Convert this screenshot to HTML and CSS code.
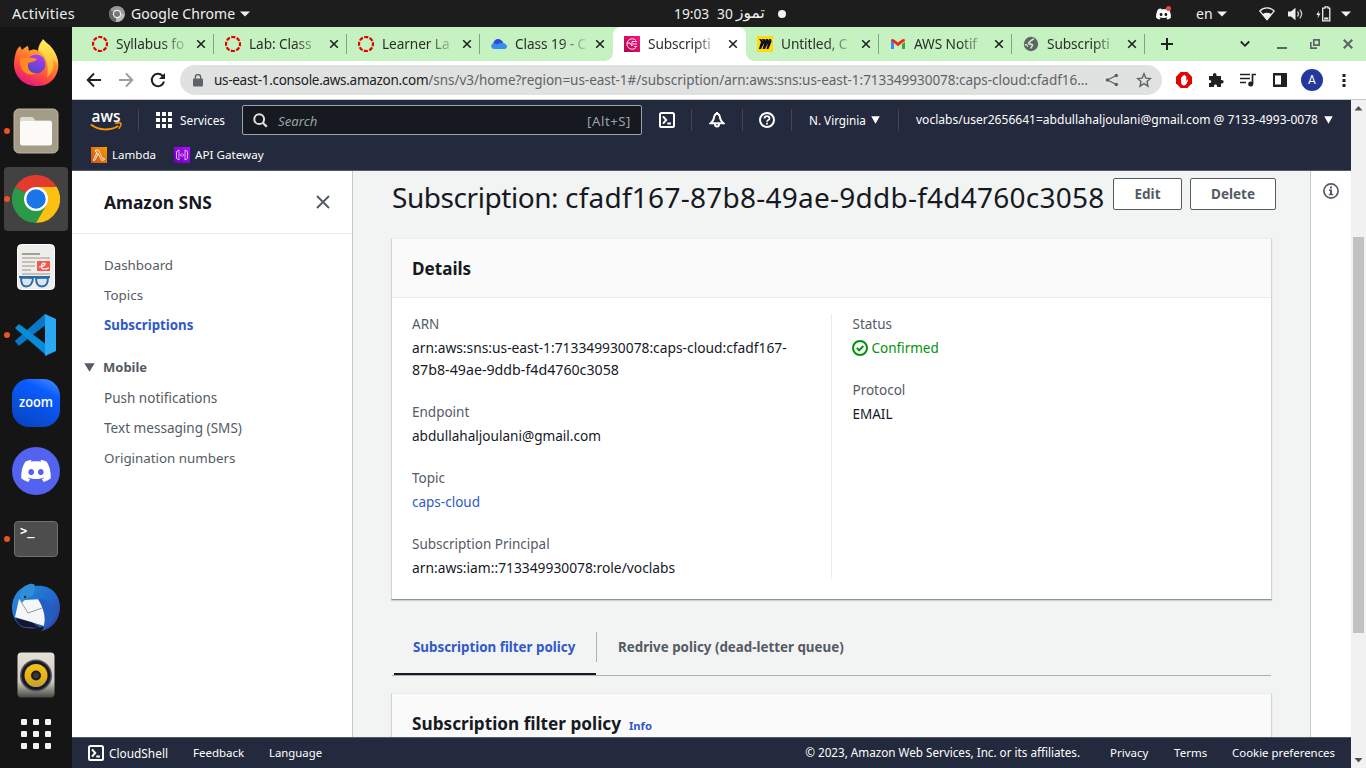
FILE: index.html
```html
<!DOCTYPE html>
<html lang="en">
<head>
<meta charset="utf-8">
<title>Subscription | Amazon SNS</title>
<link rel="stylesheet" href="styles.css">
</head>
<body>
<svg class="defs" width="0" height="0" aria-hidden="true">
  <defs>
    <linearGradient id="ffBody" x1=".8" y1="0" x2=".3" y2="1"><stop offset="0" stop-color="#fff04f"/><stop offset=".35" stop-color="#ff9a2b"/><stop offset=".7" stop-color="#ff4a3d"/><stop offset="1" stop-color="#e31587"/></linearGradient>
    <linearGradient id="ffTail" x1="0" y1="0" x2="0" y2="1"><stop offset="0" stop-color="#fff25a"/><stop offset="1" stop-color="#ffa62b"/></linearGradient>
    <linearGradient id="ffGlobe" x1=".7" y1="0" x2=".4" y2="1"><stop offset="0" stop-color="#b33df5"/><stop offset="1" stop-color="#4f46c8"/></linearGradient>
    <linearGradient id="zoomBg" x1=".8" y1="0" x2=".3" y2="1"><stop offset="0" stop-color="#3f86ff"/><stop offset=".25" stop-color="#0b5cff"/><stop offset="1" stop-color="#0845c4"/></linearGradient>
    <linearGradient id="tbBg" x1="0" y1="0" x2="1" y2="1"><stop offset="0" stop-color="#2f8fe0"/><stop offset=".5" stop-color="#1f6fd0"/><stop offset="1" stop-color="#3b35a0"/></linearGradient>
    <linearGradient id="spkBg" x1="0" y1="0" x2="0" y2="1"><stop offset="0" stop-color="#e6e1d6"/><stop offset=".65" stop-color="#cfcabf"/><stop offset="1" stop-color="#4a4946"/></linearGradient>
    <linearGradient id="spkY" x1="0" y1="0" x2="0" y2="1"><stop offset="0" stop-color="#f3c419"/><stop offset=".6" stop-color="#e9b013"/><stop offset="1" stop-color="#b8a03a"/></linearGradient>
    <linearGradient id="lamBg" x1="0" y1="1" x2="1" y2="0"><stop offset="0" stop-color="#c8511b"/><stop offset="1" stop-color="#f90"/></linearGradient>
    <linearGradient id="apiBg" x1="0" y1="1" x2="1" y2="0"><stop offset="0" stop-color="#6a00b8"/><stop offset="1" stop-color="#b40cff"/></linearGradient>
    <linearGradient id="snsBg" x1="0" y1="1" x2="1" y2="0"><stop offset="0" stop-color="#b0084d"/><stop offset="1" stop-color="#ff1280"/></linearGradient>
    <symbol id="canvas" viewBox="0 0 16 16"><circle cx="8" cy="8" r="7" fill="none" stroke="#e40000" stroke-width="2.2" stroke-dasharray="4.1 1.4" stroke-dashoffset="2"/></symbol>
    <symbol id="close" viewBox="0 0 10 10"><path d="M1.2 1.2l7.6 7.6M8.8 1.2L1.2 8.8" stroke="currentColor" stroke-width="1.6" fill="none"/></symbol>
    <symbol id="shell" viewBox="0 0 16 16"><rect x="1" y="1" width="14" height="14" rx="1.6" fill="none" stroke="#fff" stroke-width="2"/><path d="M4 4.400L7.200 8 4 11.600M8.300 11.500h3.600" fill="none" stroke="#fff" stroke-width="2"/></symbol>
    <symbol id="caret" viewBox="0 0 10 8" preserveAspectRatio="none"><path d="M.3.300h9.400L5 7.800z" fill="currentColor"/></symbol>
    <symbol id="discord" viewBox="0 0 30 24"><path d="M10.500 1.500L9.600 1C7.500 1.400 5.600 2 4.200 2.700 1.500 7 0 12.500.2 19.300c2.300 1.900 4.700 3 7.200 3.700l1.700-2.900-2.300-1.200.7-.5c4.700 2 10.300 2 15 0l.7.5-2.300 1.200 1.700 2.900c2.500-.7 4.900-1.800 7.200-3.700C30 12.500 28.500 7 25.800 2.700 24.400 2 22.500 1.400 20.400 1l-.9.500.5 1.200c-3.200-.5-6.800-.5-10 0zM10.200 10c1.700 0 2.900 1.400 2.900 3.100s-1.200 3.100-2.900 3.100-2.900-1.400-2.900-3.100S8.500 10 10.200 10zm9.600 0c1.700 0 2.900 1.400 2.900 3.100s-1.200 3.100-2.900 3.100-2.900-1.400-2.900-3.100S18.100 10 19.800 10z" fill="#fff" fill-rule="evenodd"/></symbol>
  </defs>
</svg>

<header class="topbar">
  <span class="activities">Activities</span>
  <span class="app-menu">
    <svg width="16" height="16" viewBox="0 0 16 16"><circle cx="8" cy="8" r="8" fill="#9a9a9a"/><path d="M8 8L1.200 4A8 8 0 0 0 7 16z" fill="#666"/><path d="M8 8h7.500A8 8 0 0 1 7 16z" fill="#bdbdbd"/><circle cx="8" cy="8" r="3.600" fill="#777" stroke="#f1f1f1" stroke-width="1.200"/></svg>
    <span class="app-name">Google Chrome</span>
    <svg class="tri" width="10" height="6" viewBox="0 0 10 6"><path d="M0 .5h10L5 5.500z" fill="#f2f2f2"/></svg>
  </span>
  <span class="clock"><span>19:03</span><span>30</span><span class="ar">تموز</span><i></i></span>
  <span class="tray">
    <span class="tray-discord"><svg width="15" height="12"><use href="#discord"/></svg><i></i></span>
    <span class="lang">en</span>
    <svg class="tri t1" width="10" height="6" viewBox="0 0 10 6"><path d="M0 .5h10L5 5.500z" fill="#f2f2f2"/></svg>
    <svg class="wifi" width="16" height="14" viewBox="0 0 16 14"><path d="M.8 4C5-.2 11-.2 15.200 4L8 12.800z" fill="none" stroke="#eee" stroke-width="1.200"/><path d="M3.400 7.200c3-1.900 6.200-1.900 9.200 0L8 13z" fill="#eee"/></svg>
    <svg class="vol" width="16" height="14" viewBox="0 0 16 14"><path d="M0 4.500h3L7.500.8v12.400L3 9.500H0z" fill="#eee"/><path d="M9.500 4.500c1.200 1.500 1.200 3.500 0 5M11.800 2.700c2.200 2.600 2.200 6 0 8.600" fill="none" stroke="#ccc" stroke-width="1.300"/></svg>
    <svg class="bat" width="15" height="16" viewBox="0 0 15 16"><path d="M3 4.500L.3 9h2L1.500 12.500 4.500 7.500h-2z" fill="#eee"/><path d="M6.700 2.200H9V.8h3v1.400h1.800v12.600H6.700z" fill="none" stroke="#eee" stroke-width="1.300"/><path d="M8.200 11.500h4.200v2H8.200z" fill="#eee"/></svg>
    <svg class="tri" width="10" height="6" viewBox="0 0 10 6"><path d="M0 .5h10L5 5.500z" fill="#f2f2f2"/></svg>
  </span>
</header>

<div class="desktop">
<nav class="dock">
  <div class="app"><svg width="46" height="48" viewBox="0 0 46 48"><path d="M3 13c1-3 3-5 4-6l2 4c2-2 5-4 6-4l1 5c3-2 7-2 9 0 0-6 4-10 5-12 3 4 8 6 11 12 6 10 5 18 2 24-4 8-11 11-19 11C11 47 1 38 1 25c0-5 1-8 2-12z" fill="url(#ffBody)"/><path d="M26 12c0-5 2-9 5-11 2 5 8 6 11 13 2 4 3 8 3 12-2-4-4-5-5-5 2 9-2 15-6 17 2-10 0-20-8-26z" fill="url(#ffTail)"/><circle cx="23" cy="25" r="9.500" fill="url(#ffGlobe)"/><path d="M7 20c4-2 12-2 17 0-2 4-8 2-9 5-1 6 4 10 9 9-9 5-18-2-17-14z" fill="#ff8a20"/></svg></div>
  <div class="app run"><svg width="46" height="46" viewBox="0 0 46 46"><rect x="1" y="1" width="44" height="44" rx="5" fill="#a59c88" stroke="#bdb6a5"/><path d="M7 11.500q0-2.500 2.500-2.500h9q1.500 0 2.500 1.500l1.500 2H37q2 0 2 2V20H7z" fill="#dedbd0"/><rect x="7" y="13" width="32" height="24.500" rx="2.500" fill="#fbfaf8"/></svg></div>
  <div class="app run active"><svg width="48" height="48" viewBox="0 0 48 48"><path d="M24 24L3.200 12A24 24 0 0 1 44.800 12z" fill="#e33b2e"/><path d="M24 24L3.200 12A24 24 0 0 0 24 48l10.400-18z" fill="#2a9a48"/><path d="M24 12h20.800A24 24 0 0 1 24 48L34.400 30z" fill="#fcc013"/><circle cx="24" cy="24" r="12" fill="#fff"/><circle cx="24" cy="24" r="9.700" fill="#1b74e8"/></svg></div>
  <div class="app"><svg width="38" height="46" viewBox="0 0 38 46"><rect x=".5" y=".5" width="37" height="45" rx="4" fill="#ededee" stroke="#fff"/><path d="M5 10h18" stroke="#a79d8b" stroke-width="2"/><path d="M5 14h28M5 18h13M5 22h13M5 26h9M5 30h28" stroke="#b9b3a6" stroke-width="1.700"/><rect x="20" y="17" width="13" height="10" fill="#f4584c"/><path d="M22 23c5 0 8-4 5-4s-4 6 0 6 3-1 5-1" stroke="#fff" stroke-width="1.200" fill="none"/><path d="M2 33h31M4 33.500c0 6 1.500 9 5 9s6.500-2.500 7-8.500zm15 .5c0 6 2.500 8.500 6 8.500s6-3 6-9z" fill="#dde5ec" stroke="#2869a8" stroke-width="1.900"/></svg></div>
  <div class="app run"><svg width="44" height="44" viewBox="0 0 44 44"><path d="M1 28L31 1v11L5 33z" fill="#0767b3"/><path d="M31 1L1 28l4 4L33 11z" fill="#0a78c4"/><path d="M1 15l4-4 28 21v11z" fill="#078dd8"/><path d="M31 1l11 5v32l-11 5z" fill="#29a9f4"/></svg></div>
  <div class="app"><svg width="48" height="48" viewBox="0 0 48 48"><rect width="48" height="48" rx="17" fill="url(#zoomBg)"/><text class="zoom-word" x="24" y="28" text-anchor="middle" textLength="34" lengthAdjust="spacingAndGlyphs">zoom</text></svg></div>
  <div class="app"><span class="discord"><svg width="30" height="24"><use href="#discord"/></svg></span></div>
  <div class="app run"><span class="term">&gt;_</span></div>
  <div class="app"><svg width="48" height="48" viewBox="0 0 48 48"><path d="M18 1c4-1 5 1 5 2 16-2 25 9 25 21 0 13-8 22-19 24l5-5c-9 3-18 3-24 1C3 39 0 32 0 25 0 12 8 4 18 1z" fill="url(#tbBg)"/><path d="M3 35c3 6 7 9 11 9l14 1-8-6z" fill="#17142b"/><path d="M7 16l3 3 3-2 17-1q4 5 2 12l2 7-2 8L3 34z" fill="#f5f6f7"/><path d="M8 17l8 13 17-6" fill="none" stroke="#999" stroke-width="1"/><path d="M8 14c0-8 5-12 11-13 5 2 4 5 3 9-2 5-8 3-12 10z" fill="#2f8fd6"/><circle cx="13" cy="14" r="1.200" fill="#222"/><path d="M30 16c7 1 10 7 9 13l6-3c-2 11-8 17-14 21 2-7 4-16-5-31z" fill="#225fc0"/></svg></div>
  <div class="app"><svg width="38" height="46" viewBox="0 0 38 46"><rect x=".5" y=".5" width="37" height="45" rx="4" fill="url(#spkBg)"/><circle cx="19" cy="23.500" r="16" fill="#55565a"/><circle cx="19" cy="23.500" r="14.500" fill="#17192b"/><circle cx="19" cy="23.500" r="11.500" fill="url(#spkY)"/><circle cx="19" cy="23.500" r="5" fill="#1c1c1c"/><circle cx="19" cy="23.500" r="3" fill="#383838"/></svg></div>
  <div class="grid9"><i></i><i></i><i></i><i></i><i></i><i></i><i></i><i></i><i></i></div>
</nav>

<div class="window">
  <div class="tabs">
    <div class="tab sep"><svg width="16" height="16"><use href="#canvas"/></svg><span>Syllabus fo</span><svg class="x" width="10" height="10"><use href="#close"/></svg></div>
    <div class="tab sep"><svg width="16" height="16"><use href="#canvas"/></svg><span>Lab: Class</span><svg class="x" width="10" height="10"><use href="#close"/></svg></div>
    <div class="tab sep"><svg width="16" height="16"><use href="#canvas"/></svg><span>Learner La</span><svg class="x" width="10" height="10"><use href="#close"/></svg></div>
    <div class="tab"><svg width="16" height="16" viewBox="0 0 16 16"><path d="M2 8.500C2.500 4 6 2 9 3.500c2 .8 3 2.300 3.500 4L9 12z" fill="#2b50d8"/><path d="M6 8.500C10 5.500 16 7 16 10.500c0 1.500-1.200 2.500-2.500 2.500H3.400C-.8 12.800-.8 7.500 3 7.200z" fill="#3a8df0"/></svg><span>Class 19 - C</span><svg class="x" width="10" height="10"><use href="#close"/></svg></div>
    <div class="tab current"><svg width="16" height="16" viewBox="0 0 16 16"><rect width="16" height="16" fill="url(#snsBg)"/><path d="M12 4.500A5.200 5.200 0 1 0 12 11.500M3 7h3l2 3V5.500h2.500M9 8h4M10.500 5.500H13M10 10.500h3" fill="none" stroke="#fff" stroke-width=".9"/></svg><span>Subscripti</span><svg class="x" width="10" height="10"><use href="#close"/></svg></div>
    <div class="tab sep"><svg width="16" height="16" viewBox="0 0 16 16"><rect width="16" height="16" fill="#ffdd00"/><path d="M2 3h2.200l1.300 2L5 3h2.500l1.300 2L8.500 3H11l1.300 2L12 3h2l.6 2.500L11.500 13H9.300l2-6-3.500 6H5.600l1.800-6.500L4 13H1.800L4 6z" fill="#100c2c"/></svg><span>Untitled, C</span><svg class="x" width="10" height="10"><use href="#close"/></svg></div>
    <div class="tab sep"><svg width="16" height="16" viewBox="0 0 16 16"><path d="M1 4v9h3V6z" fill="#4285f4"/><path d="M15 4v9h-3V6z" fill="#34a853"/><path d="M12 4.500l3-1V6l-3 2.500z" fill="#fbbc04"/><path d="M1 4.500C1 2.800 2.600 2.400 4 3.500L8 6.600l4-3.100C13.400 2.400 15 2.800 15 4.500L8 10.200z" fill="#ea2b1f"/></svg><span>AWS Notif</span><svg class="x" width="10" height="10"><use href="#close"/></svg></div>
    <div class="tab sep"><svg width="16" height="16" viewBox="0 0 16 16"><circle cx="8" cy="8" r="7.200" fill="#5f6368"/><path d="M10.500 2.500c-.5 1.800-2.500 1-3 2.500s-2 .8-2 2.300 3.500.2 4 1.700c.3 1.300-1.500 1.500-1.500 3.500M1.800 8.500c1.500 0 2.500.5 3 2" fill="none" stroke="#c5f2c0" stroke-width="1.600"/></svg><span>Subscripti</span><svg class="x" width="10" height="10"><use href="#close"/></svg></div>
    <svg class="plus" width="12" height="12" viewBox="0 0 12 12"><path d="M6 0v12M0 6h12" stroke="#202124" stroke-width="2"/></svg>
    <div class="controls">
      <svg width="10" height="8" viewBox="0 0 10 8"><path d="M.8 1.500L5 5.800l4.200-4.300" fill="none" stroke="#202124" stroke-width="1.800"/></svg>
      <svg class="min" width="10" height="10" viewBox="0 0 10 10"><path d="M0 9h10" stroke="#5f6368" stroke-width="2"/></svg>
      <svg width="10" height="10" viewBox="0 0 10 10"><path d="M3.800.8h5.400v5.400H3.800zM.8 3v6.200H7" fill="none" stroke="#5f6368" stroke-width="1.700"/></svg>
      <svg width="10" height="10" viewBox="0 0 10 10"><path d="M.8.800l8.400 8.400M9.200.8L.8 9.200" stroke="#5f6368" stroke-width="2.100"/></svg>
    </div>
  </div>

  <div class="toolbar">
    <div class="nav-btns">
      <svg width="16" height="16" viewBox="0 0 16 16"><path d="M15 8H2M8 1.500L1.700 8 8 14.500" fill="none" stroke="#202124" stroke-width="1.900"/></svg>
      <svg width="16" height="16" viewBox="0 0 16 16"><path d="M1 8h13M8 1.500L14.300 8 8 14.500" fill="none" stroke="#9b9c9e" stroke-width="1.900"/></svg>
      <svg width="16" height="16" viewBox="0 0 16 16"><path d="M14 9.500A6.200 6.200 0 1 1 12.500 3.700L14 5.200" fill="none" stroke="#202124" stroke-width="2"/><path d="M15 1v6H9z" fill="#202124"/></svg>
    </div>
    <div class="omnibox">
      <svg width="10" height="13" viewBox="0 0 10 13"><rect y="4.500" width="10" height="8" rx="1" fill="#5f6368"/><path d="M2.300 5V3.200a2.700 2.700 0 0 1 5.400 0V5" fill="none" stroke="#5f6368" stroke-width="1.400"/></svg>
      <div class="url"><b>us-east-1.console.aws.amazon.com</b><span>/sns/v3/home?region=us-east-1#/subscription/arn:aws:sns:us-east-1:713349930078:caps-cloud:cfadf16…</span></div>
      <svg class="share" width="14" height="14" viewBox="0 0 14 14"><path d="M11.300 2.500L2.500 7l8.800 4.500" fill="none" stroke="#5f6368" stroke-width="1.300"/><circle cx="11.300" cy="2.500" r="1.800" fill="#5f6368"/><circle cx="2.500" cy="7" r="1.800" fill="#5f6368"/><circle cx="11.300" cy="11.500" r="1.800" fill="#5f6368"/></svg>
      <svg class="star" width="16" height="16" viewBox="0 0 16 16"><path d="M8 1.800l1.800 4.300 4.700.4-3.500 3.100 1 4.600L8 11.700l-4 2.500 1-4.600L1.500 6.500l4.700-.4z" fill="none" stroke="#5f6368" stroke-width="1.400"/></svg>
    </div>
    <div class="ext">
      <svg width="16" height="16" viewBox="0 0 16 16"><path d="M4.700 0h6.600L16 4.700v6.600L11.300 16H4.700L0 11.300V4.700z" fill="#e60000"/><path d="M5 9.500V5.500q.7-.7 1.300 0V4q.7-.8 1.300 0v-.8q.8-.8 1.400 0V4q.7-.7 1.300 0v5l.8-1.200q1-.6 1 .3l-1.700 4q-.6 1.300-2 1.300H7.500Q5 13 5 9.500z" fill="#fff"/></svg>
      <svg width="16" height="16" viewBox="0 0 16 16"><path d="M1 4h4c-.8-4 4-4 3.500 0H13v4c3.500-.6 3.500 4 0 3.500V15H9c.6-3.400-3.600-3.400-3 0H1v-4c3 .6 3-3.500 0-3z" fill="#202124"/></svg>
      <svg width="16" height="14" viewBox="0 0 16 14"><path d="M0 1.500h10M0 5.500h10M0 9.500h6" stroke="#202124" stroke-width="1.700"/><path d="M12.500 11V1.500H16" fill="none" stroke="#202124" stroke-width="1.700"/><circle cx="10.700" cy="11" r="2.500" fill="#202124"/></svg>
      <svg width="16" height="16" viewBox="0 0 16 16"><path d="M1 1h14v14H1zM3 3.500v9h6v-9z" fill="#202124" fill-rule="evenodd"/></svg>
      <span class="avatar">A</span>
      <svg width="16" height="16" viewBox="0 0 16 16"><path d="M6.500 2h3v3h-3zM6.500 7h3v3h-3zM6.500 12h3v3h-3z" fill="#202124"/></svg>
    </div>
  </div>

  <div class="viewport">
  <div class="page">
    <header class="aws">
      <div class="aws-row">
        <svg class="logo" width="32" height="26" viewBox="0 -4 32 26"><text class="logo-word" x="16" y="11" text-anchor="middle" textLength="29" lengthAdjust="spacingAndGlyphs">aws</text><path d="M.8 13.500c8.500 6.300 19.500 6.300 27.500 1.500" fill="none" stroke="#f90" stroke-width="1.900"/><path d="M25 12.600c2-1 5.500-1 6-.3.300.8-.7 4-2.400 5.400" fill="none" stroke="#f90" stroke-width="1.400"/></svg>
        <i class="bar b1"></i>
        <svg class="nine" width="16" height="16" viewBox="0 0 16 16"><path d="M0 0h4v4H0zM6 0h4v4H6zM12 0h4v4h-4zM0 6h4v4H0zM6 6h4v4H6zM12 6h4v4h-4zM0 12h4v4H0zM6 12h4v4H6zM12 12h4v4h-4z" fill="#fff"/></svg>
        <span class="services">Services</span>
        <div class="search"><svg width="15" height="15" viewBox="0 0 15 15"><circle cx="6.200" cy="6.200" r="4.900" fill="none" stroke="#dfe3e3" stroke-width="2"/><path d="M9.800 9.800l4 4" stroke="#dfe3e3" stroke-width="2.200"/></svg><em>Search</em><span>[Alt+S]</span></div>
        <svg class="hshell" width="16" height="16"><use href="#shell"/></svg>
        <i class="bar b2"></i>
        <svg width="16" height="16" viewBox="0 0 16 16"><path d="M8 1.800C6.200 1.800 5.200 3.300 4.800 6.500 4.500 8.500 3.500 9.600 1.600 11.200h12.800C12.500 9.600 11.500 8.500 11.200 6.500 10.800 3.300 9.800 1.800 8 1.800z" fill="none" stroke="#fff" stroke-width="2"/><path d="M6 12a2 2.600 0 0 0 4 0M8 0v2" fill="none" stroke="#fff" stroke-width="2"/></svg>
        <i class="bar b3"></i>
        <svg width="16" height="16" viewBox="0 0 16 16"><circle cx="8" cy="8" r="7" fill="none" stroke="#fff" stroke-width="2"/><path d="M5.500 6.500c0-3.200 5-3.200 5 0C10.500 8.200 8 8 8 9.800" fill="none" stroke="#fff" stroke-width="1.700"/><path d="M7.100 10.800h1.800v1.700H7.100z" fill="#fff"/></svg>
        <i class="bar b4"></i>
        <span class="region">N. Virginia</span><svg class="c" width="9" height="8"><use href="#caret"/></svg>
        <i class="bar b5"></i>
        <span class="account">voclabs/user2656641=abdullahaljoulani@gmail.com @ 7133-4993-0078</span><svg class="c2" width="9" height="8"><use href="#caret"/></svg>
      </div>
      <div class="aws-fav">
        <svg width="16" height="16" viewBox="0 0 16 16"><rect width="16" height="16" fill="url(#lamBg)"/><path d="M4.500 3h3l4 8.500 1.300-.5.700 1.500-2.700 1L7 6.500 4 13.300H2.300L6.200 5H4.500z" fill="none" stroke="#fff" stroke-width=".8"/></svg><span class="lambda">Lambda</span>
        <svg width="16" height="16" viewBox="0 0 16 16"><rect width="16" height="16" fill="url(#apiBg)"/><path d="M2.500 4.500L5 3v10l-2.500-1.500zM13.500 4.500L11 3v10l2.500-1.500zM7.500 6.500L6.500 8l1 1.500M8.600 6.500l1 1.500-1 1.500" fill="none" stroke="#f2d9ff" stroke-width=".8"/></svg><span class="apigw">API Gateway</span>
      </div>
    </header>

    <div class="body">
      <aside class="side">
        <div class="side-head"><h2>Amazon SNS</h2><svg width="14" height="14" viewBox="0 0 14 14"><path d="M1 1l12 12M13 1L1 13" stroke="#545b64" stroke-width="1.900"/></svg></div>
        <ul class="links top"><li>Dashboard</li><li class="topics">Topics</li><li class="sel">Subscriptions</li></ul>
        <div class="group"><svg width="11" height="9"><use href="#caret"/></svg><b>Mobile</b></div>
        <ul class="links sub"><li>Push notifications</li><li>Text messaging (SMS)</li><li>Origination numbers</li></ul>
      </aside>

      <main class="main">
        <div class="title"><h1><span class="kind">Subscription: </span><span class="uid">cfadf167-87b8-49ae-9ddb-f4d4760c3058</span></h1><button class="edit">Edit</button><button class="delete">Delete</button></div>
        <section class="card details">
          <div class="card-head"><h2>Details</h2></div>
          <div class="cols">
            <dl>
              <dt>ARN</dt><dd><span class="arn">arn:aws:sns:us-east-1:713349930078:caps-cloud:cfadf167-</span><br><span class="arn2">87b8-49ae-9ddb-f4d4760c3058</span></dd>
              <dt>Endpoint</dt><dd class="mail">abdullahaljoulani@gmail.com</dd>
              <dt>Topic</dt><dd class="link">caps-cloud</dd>
              <dt>Subscription Principal</dt><dd class="arn">arn:aws:iam::713349930078:role/voclabs</dd>
            </dl>
            <dl class="right">
              <dt>Status</dt><dd class="ok"><svg width="16" height="16" viewBox="0 0 16 16"><circle cx="8" cy="8" r="7" fill="none" stroke="#00930c" stroke-width="2"/><path d="M4.800 8l2.400 2.400L11.300 6" fill="none" stroke="#00930c" stroke-width="2"/></svg>Confirmed</dd>
              <dt>Protocol</dt><dd>EMAIL</dd>
            </dl>
          </div>
        </section>
        <div class="tablist"><div class="t on"><span>Subscription filter policy</span></div><i></i><div class="t"><span>Redrive policy (dead-letter queue)</span></div></div>
        <section class="card policy"><div class="card-head"><h2>Subscription filter policy</h2><span class="info">Info</span></div></section>
      </main>

      <aside class="help"><svg width="16" height="16" viewBox="0 0 16 16"><circle cx="8" cy="8" r="7.100" fill="none" stroke="#545b64" stroke-width="1.700"/><path d="M7 3.500h2v1.900H7zM6 6.500h3v4.300h1.200v1.500H5.800v-1.500H7V8H6z" fill="#545b64"/></svg></aside>
    </div>

    <footer class="foot">
      <svg width="16" height="16"><use href="#shell"/></svg><span class="f1">CloudShell</span><span class="f2">Feedback</span><span class="f3">Language</span>
      <span class="f4">© 2023, Amazon Web Services, Inc. or its affiliates.</span><span class="f5">Privacy</span><span class="f6">Terms</span><span class="f7">Cookie preferences</span>
    </footer>
  </div>
  <div class="scroll"><svg width="9" height="5" viewBox="0 0 9 5"><path d="M4.500 0L8.500 4.500h-8z" fill="#505050"/></svg><i></i><svg width="9" height="5" viewBox="0 0 9 5"><path d="M4.500 4.500L.5 0h8z" fill="#505050"/></svg></div>
  </div>
</div>
</div>
</body>
</html>
```
FILE: styles.css
```css
* { box-sizing: border-box; }
body { margin: 0; width: 1366px; height: 768px; overflow: hidden; font-family: "Noto Sans", "DejaVu Sans", sans-serif; color: #16191f; display: flex; flex-direction: column; }
svg { display: block; flex: none; }
.defs { position: absolute; }
h1, h2, ul, dl, dt, dd { margin: 0; padding: 0; list-style: none; }
span, b, li, h1, h2 { white-space: nowrap; }

/* Desktop top bar */
.topbar { height: 27px; background: #1d1d1d; color: #f0f0f0; display: flex; align-items: center; font-size: 14px; line-height: 27px; flex: none; }
.activities { font-size: 14.500px; letter-spacing: .25px; width: 97px; padding-left: 12px; }
.app-menu { display: flex; align-items: center; padding-left: 12px; width: 577px; }
.app-name { margin: 0 5px 0 6px; letter-spacing: .06px; }
.clock { display: flex; align-items: center; font-size: 13.800px; }
.clock span:nth-child(1) { width: 43px; }
.clock span:nth-child(2) { width: 19px; }
.clock .ar { width: 30px; font-family: "DejaVu Sans", sans-serif; font-size: 15.500px; }
.clock i { width: 8px; height: 8px; border-radius: 50%; background: #f4f4f4; margin-left: 12px; }
.tray { margin-left: auto; display: flex; align-items: center; padding-right: 15px; }
.tray-discord { position: relative; margin-right: 25px; }
.tray-discord i { position: absolute; right: 0; top: -2px; width: 5px; height: 5px; border-radius: 50%; background: #ed4245; }
.lang { width: 16px; }
.t1 { margin: 0 32px 0 5px; }
.vol { margin: 0 12px 0 13px; }
.bat { margin-right: 10px; }

.desktop { display: flex; flex: 1; min-height: 0; }

/* Dock */
.dock { width: 72px; background: #151516; padding: 4px; display: flex; flex-direction: column; gap: 4px; flex: none; }
.app { height: 64px; border-radius: 4px; display: flex; align-items: center; justify-content: center; position: relative; flex: none; }
.app.active { background: #424242; }
.app.run::before { content: ""; position: absolute; left: 0; top: 29px; width: 6px; height: 6px; border-radius: 50%; background: #e95420; }
.zoom-word { font: 600 14px "Open Sans", sans-serif; fill: #fff; }
.discord { width: 48px; height: 48px; border-radius: 50%; background: #5462f0; display: flex; align-items: center; justify-content: center; }
.term { width: 44px; height: 36px; border-radius: 4px; background: #4d4d4d; border: 1px solid #707070; color: #fff; font: bold 12px/14px "DejaVu Sans Mono", monospace; padding: 2px 5px; }
.grid9 { display: grid; grid-template-columns: repeat(3, 6px); gap: 6px; margin: auto auto 15px; }
.grid9 i { width: 6px; height: 6px; border-radius: 1px; background: #f2f2f2; }

/* Browser */
.window { flex: 1; min-width: 0; display: flex; flex-direction: column; background: #fff; }
.tabs { height: 34px; flex: none; background: #c5f2c0; display: flex; align-items: center; padding-left: 9px; }
.tab { width: 133px; height: 34px; padding: 0 10px 0 11px; display: flex; align-items: center; position: relative; color: #2b2f2b; font-size: 13.700px; }
.tab span { width: 71px; flex: none; line-height: 20px; padding-bottom: 1px; margin: 0 9px 0 8px; letter-spacing: -.1px; -webkit-mask-image: linear-gradient(90deg, #000 64%, rgba(0, 0, 0, .12) 100%); mask-image: linear-gradient(90deg, #000 64%, rgba(0, 0, 0, .12) 100%); }
.tab .x { color: #202124; }
.tab.sep::after { content: ""; position: absolute; right: 0; top: 7px; width: 1px; height: 20px; background: #82a37f; }
.tab.current { background: #fff; border-radius: 8px 8px 0 0; }
.tab.current::before, .tab.current::after { content: ""; position: absolute; bottom: 0; width: 8px; height: 8px; }
.tab.current::before { left: -8px; background: radial-gradient(circle at 0 0, transparent 7.500px, #fff 8px); }
.tab.current::after { right: -8px; background: radial-gradient(circle at 100% 0, transparent 7.500px, #fff 8px); }
.plus { margin-left: 16px; }
.controls { margin-left: auto; display: flex; align-items: center; gap: 23px; padding-right: 13px; }
.controls svg:first-child { margin-right: 4px; }
.toolbar { height: 39px; flex: none; border-bottom: 1px solid #c8c8c8; display: flex; align-items: center; padding: 0 14px; }
.nav-btns { display: flex; gap: 16px; margin-right: 14px; }
.omnibox { width: 982px; height: 30px; border-radius: 15px; background: #e0e1e1; display: flex; align-items: center; padding-left: 13px; }
.url { display: flex; width: 877px; margin: 0 14px 0 11px; align-items: baseline; color: #5f6368; line-height: 20px; padding-bottom: 1px; }
.url b { font-weight: 400; font-size: 13.500px; letter-spacing: -.29px; color: #202124; }
.url span { font-size: 13.500px; letter-spacing: -.03px; }
.share { margin-right: 17px; }
.ext { display: flex; align-items: center; gap: 16px; margin-left: 14px; }
.avatar { width: 22px; height: 22px; margin: 0 -3px; border-radius: 50%; background: #24389c; color: #fff; font: 12px/22px Roboto, sans-serif; text-align: center; }

.viewport { flex: 1; display: flex; min-height: 0; }
.page { width: 1279px; display: flex; flex-direction: column; }
.scroll { width: 15px; background: #f1f1f1; display: flex; flex-direction: column; align-items: center; padding: 6px 0 5px; }
.scroll i { width: 11px; height: 396px; background: #c1c1c1; margin: 126px 0 auto; }

/* Console header */
.aws { height: 71px; flex: none; background: #232a3d; border-bottom: 1px solid #545b64; color: #fff; }
.aws-row { height: 40px; display: flex; align-items: center; padding-left: 18px; }
.aws span { padding-bottom: 1px; }
.logo-word { font: 600 17px/17px "Open Sans", sans-serif; fill: #fff; }
.bar { width: 1px; height: 22px; background: #414750; }
.b1 { margin: 0 17px 0 16px; }
.services { font-size: 11.800px; width: 62px; margin-left: 8px; }
.search { width: 400px; height: 30px; border: 1px solid #95a5a6; border-radius: 2px; background: #16191f; color: #95a5a6; display: flex; align-items: center; padding: 0 10px 0 10px; font-size: 13.200px; margin-right: 17px; }
.search em { margin-left: 10px; flex: 1; padding-top: 1px; }
.search span { letter-spacing: .55px; padding: 0; margin-top: 1px; }
.b2 { margin: 0 17px 0 16px; }
.b3 { margin: 0 16px 0 17px; }
.b4 { margin: 0 17px 0 16px; }
.region { font-size: 11.730px; width: 62px; }
.account { font-size: 12.050px; width: 408px; }
.b5 { margin: 0 17px 0 18px; }
.aws-fav { height: 30px; display: flex; align-items: center; padding-left: 19px; }
.lambda { font-size: 11.550px; width: 62px; margin-left: 5px; }
.apigw { font-size: 11.650px; margin-left: 5px; }

/* Console body */
.body { flex: 1; min-height: 0; display: flex; background: #f2f3f3; overflow: hidden; }
.side { width: 281px; background: #fff; border-right: 1px solid #c4cacc; flex: none; color: #545b64; }
.side-head { height: 63px; border-bottom: 1px solid #eaeded; padding: 0 22px 0 32px; display: flex; align-items: center; justify-content: space-between; }
.side-head h2 { font-size: 17.390px; line-height: 24px; color: #16191f; }
.links { padding-left: 32px; font-size: 13.350px; }
.links li { height: 30px; line-height: 30px; }
.links.top { padding-top: 16px; }
.links .topics { font-size: 13.400px; }
.links .sel { color: #3059c7; font-weight: 700; font-size: 13.280px; }
.group { display: flex; align-items: center; padding-left: 12px; height: 30px; margin: 12px 0 1px; }
.group b { font-size: 13px; margin-left: 8px; }
.sub li:first-child { font-size: 13.530px; }
.sub li:nth-child(2) { font-size: 13.570px; }
.main { flex: 1; min-width: 0; padding: 7px 34px 0 39px; }
.title { display: flex; height: 60px; align-items: flex-start; gap: 8px; }
.title h1 { width: 713px; font-weight: 400; font-size: 28px; line-height: 40px; margin-top: -1px; white-space: pre; }
.kind { white-space: pre; letter-spacing: -.44px; }
.uid { letter-spacing: .25px; }
.title button { height: 32px; border: 1px solid #545b64; border-radius: 2px; background: #fff; color: #545b64; font: 700 13.500px "Noto Sans", sans-serif; padding: 0; flex: none; }
.title .edit { width: 69px; }
.title .delete { width: 86px; }
.card { width: 881px; background: #fff; border: 1px solid #eaeded; border-left-color: #d0d5d5; border-right-color: #d0d5d5; box-shadow: 0 1px 1px rgba(0, 28, 36, .15); margin-left: -1px; }
.details { height: 362px; border-bottom-color: #8b9496; }
.card-head { height: 59px; background: #fafafa; border-bottom: 1px solid #eaeded; padding: 0 20px; display: flex; align-items: center; }
.card-head h2 { font-size: 17.100px; line-height: 24px; padding-top: 1px; }
.cols { display: flex; padding: 16px 20px 0; height: 281px; }
.cols dl { width: 420px; font-size: 13.500px; line-height: 22px; }
.cols dl.right { border-left: 1px solid #eaeded; padding-left: 20px; }
.cols dt { color: #545b64; margin-bottom: 2px; height: 22px; margin-top: -1px; }
.cols dd { margin-bottom: 21px; }
.arn { font-size: 13.800px; }
.arn2 { font-size: 14.210px; }
.mail { font-size: 13.580px; }
.cols .link { color: #3059c7; }
.ok { color: #00930c; display: flex; align-items: center; gap: 3px; }
.tablist { width: 879px; height: 56px; margin-top: 20px; border-bottom: 1px solid #a6b6b4; display: flex; padding-left: 2px; color: #545b64; font-size: 13.350px; font-weight: 700; }
.t { height: 55px; line-height: 55px; padding: 0 20px 0 19px; }
.t + i + .t { padding-left: 21px; }
.t.on { width: 202px; color: #3059c7; border-bottom: 2px solid #16191f; }
.tablist i { width: 1px; height: 30px; margin-top: 12px; background: #a6b6b4; }
.policy { margin-top: 17px; height: 120px; }
.policy .card-head h2 { font-size: 17.190px; }
.info { font-size: 11.210px; font-weight: 700; color: #3059c7; margin: 5px 0 0 8px; }
.help { width: 41px; background: #fff; border-left: 1px solid #c4cacc; padding: 12px 0 0 12px; }

.foot { height: 31px; flex: none; background: #232a3d; border-top: 1px solid #545b64; color: #fff; font-size: 11.500px; display: flex; align-items: center; padding: 0 16px; }
.foot span { padding-bottom: 1px; }
.f1 { font-size: 11.860px; margin-left: 5px; width: 84px; }
.f2 { width: 76px; }
.f3 { font-size: 11.350px; }
.f4 { font-size: 11.680px; margin-left: auto; margin-right: 30px; }
.f5 { width: 64px; }
.f6 { width: 58px; }
.f7 { font-size: 11.400px; }
```
